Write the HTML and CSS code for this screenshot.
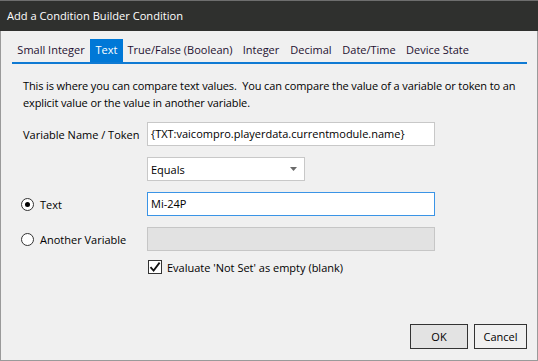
FILE: index.html
```html
<!DOCTYPE html>
<html>
<head>
<meta charset="utf-8">
<link rel="stylesheet" href="styles.css">
</head>
<body>
<div class="window">
  <div class="titlebar">Add a Condition Builder Condition</div>
  <div class="body">
    <div class="tabs">
      <div class="tab w1">Small Integer</div>
      <div class="tab w2 active">Text</div>
      <div class="tab w3">True/False (Boolean)</div>
      <div class="tab w4">Integer</div>
      <div class="tab w5">Decimal</div>
      <div class="tab w6">Date/Time</div>
      <div class="tab w7">Device State</div>
    </div>
    <div class="panel">
      <p class="desc">This is where you can compare text values.&nbsp; You can compare the value of a variable or token to an explicit value or the value in another variable.</p>
      <div class="row r1">
        <div class="label">Variable Name / Token</div>
        <div class="input">{TXT:vaicompro.playerdata.currentmodule.name}</div>
      </div>
      <div class="row r2">
        <div class="label"></div>
        <div class="select"><span>Equals</span><svg class="arrow" width="8" height="5" viewBox="0 0 8 5"><path d="M0 0H7L3.5 4Z" fill="#6a6a6a"/></svg></div>
      </div>
      <div class="row r3">
        <div class="label radio-label"><span class="radio checked"></span>Text</div>
        <div class="input focus">Mi-24P</div>
      </div>
      <div class="row r4">
        <div class="label radio-label"><span class="radio"></span>Another Variable</div>
        <div class="input disabled"></div>
      </div>
      <div class="row r5">
        <div class="label"></div>
        <div class="check-label"><span class="checkbox"><svg width="12" height="12" viewBox="0 0 12 12"><path d="M1.5 6.2L4.6 9.6L10.6 1.6" fill="none" stroke="#111" stroke-width="1.8"/></svg></span>Evaluate 'Not Set' as empty (blank)</div>
      </div>
    </div>
    <div class="buttons">
      <div class="btn ok">OK</div>
      <div class="btn cancel">Cancel</div>
    </div>
  </div>
</div>
</body>
</html>
```
FILE: styles.css
```css
* { box-sizing: border-box; }
html, body { margin: 0; padding: 0; }
body {
  width: 538px;
  height: 361px;
  font-family: "Open Sans", "Noto Sans", sans-serif;
  font-size: 11px;
  color: #000;
  background: #f0f0f0;
  overflow: hidden;
}
.window {
  width: 538px;
  height: 361px;
  border: 1px solid #9a9a9a;
  border-top-color: #6e6e6e;
  background: #f0f0f0;
  display: flex;
  flex-direction: column;
}
.titlebar {
  height: 31px;
  background: #2f302e;
  color: #fff;
  font-size: 11.1px;
  line-height: 30px;
  padding-left: 7px;
  margin: -1px -1px 0 -1px;
  border-top: 1px solid #6e6e6e;
}
.body {
  flex: 1;
  display: flex;
  flex-direction: column;
  padding-top: 8px;
}
.tabs {
  display: flex;
  margin-left: 11px;
  width: 515px;
  height: 25px;
  border-bottom: 2px solid #0f7ad3;
}
.tab {
  height: 23px;
  line-height: 22px;
  text-align: center;
  color: #1e1030;
  white-space: nowrap;
}
.tab.active { background: #0078d7; color: #fff; }
.w1 { width: 78px; }
.w2 { width: 33px; }
.w3 { width: 114px; }
.w4 { width: 48px; }
.w5 { width: 52px; }
.w6 { width: 64px; }
.w7 { width: 73px; }
.panel {
  padding-left: 21px;
  display: flex;
  flex-direction: column;
}
.desc {
  margin: 13px 0 0 1px;
  width: 500px;
  line-height: 17px;
  letter-spacing: -0.12px;
}
.row {
  display: flex;
  align-items: center;
  height: 24px;
}
.r1 { margin-top: 11px; }
.r2 { margin-top: 11px; }
.r3 { margin-top: 11px; }
.r4 { margin-top: 11px; }
.r5 { margin-top: 7px; height: 18px; }
.label {
  width: 125px;
  padding-left: 1px;
  white-space: nowrap;
}
.radio-label {
  display: flex;
  align-items: center;
  padding-left: 0;
  margin-left: -1px;
  width: 126px;
}
.radio {
  width: 13px;
  height: 13px;
  border: 1px solid #333;
  border-radius: 50%;
  background: #fff;
  margin-right: 6px;
  position: relative;
}
.radio.checked::after {
  content: "";
  position: absolute;
  left: 3px;
  top: 3px;
  width: 5px;
  height: 5px;
  border-radius: 50%;
  background: #000;
}
.input {
  width: 288px;
  height: 24px;
  border: 1px solid #c8c8c8;
  background: #fff;
  line-height: 22px;
  padding-left: 3px;
  white-space: nowrap;
}
.input.focus { border-color: #3a94e6; }
.input.disabled { background: #e2e2e2; border-color: #c6c6c6; }
.select {
  width: 158px;
  height: 24px;
  border: 1px solid #c8c8c8;
  background: #fff;
  display: flex;
  align-items: center;
  justify-content: space-between;
  padding: 0 6px 0 3px;
}
.arrow { display: block; }
.check-label {
  display: flex;
  align-items: center;
  margin-left: 1px;
}
.checkbox {
  width: 14px;
  height: 14px;
  border: 1px solid #333;
  background: #fff;
  margin-right: 5px;
  display: flex;
  align-items: center;
  justify-content: center;
}
.checkbox svg { display: block; }
.buttons {
  margin-top: auto;
  margin-bottom: 11px;
  display: flex;
  justify-content: flex-end;
  gap: 6px;
  padding-right: 10px;
}
.btn {
  height: 25px;
  border: 1px solid #333;
  text-align: center;
  line-height: 23px;
}
.ok { width: 58px; background: #e3e3e3; }
.cancel { width: 53px; background: #f0f0f0; }
```
